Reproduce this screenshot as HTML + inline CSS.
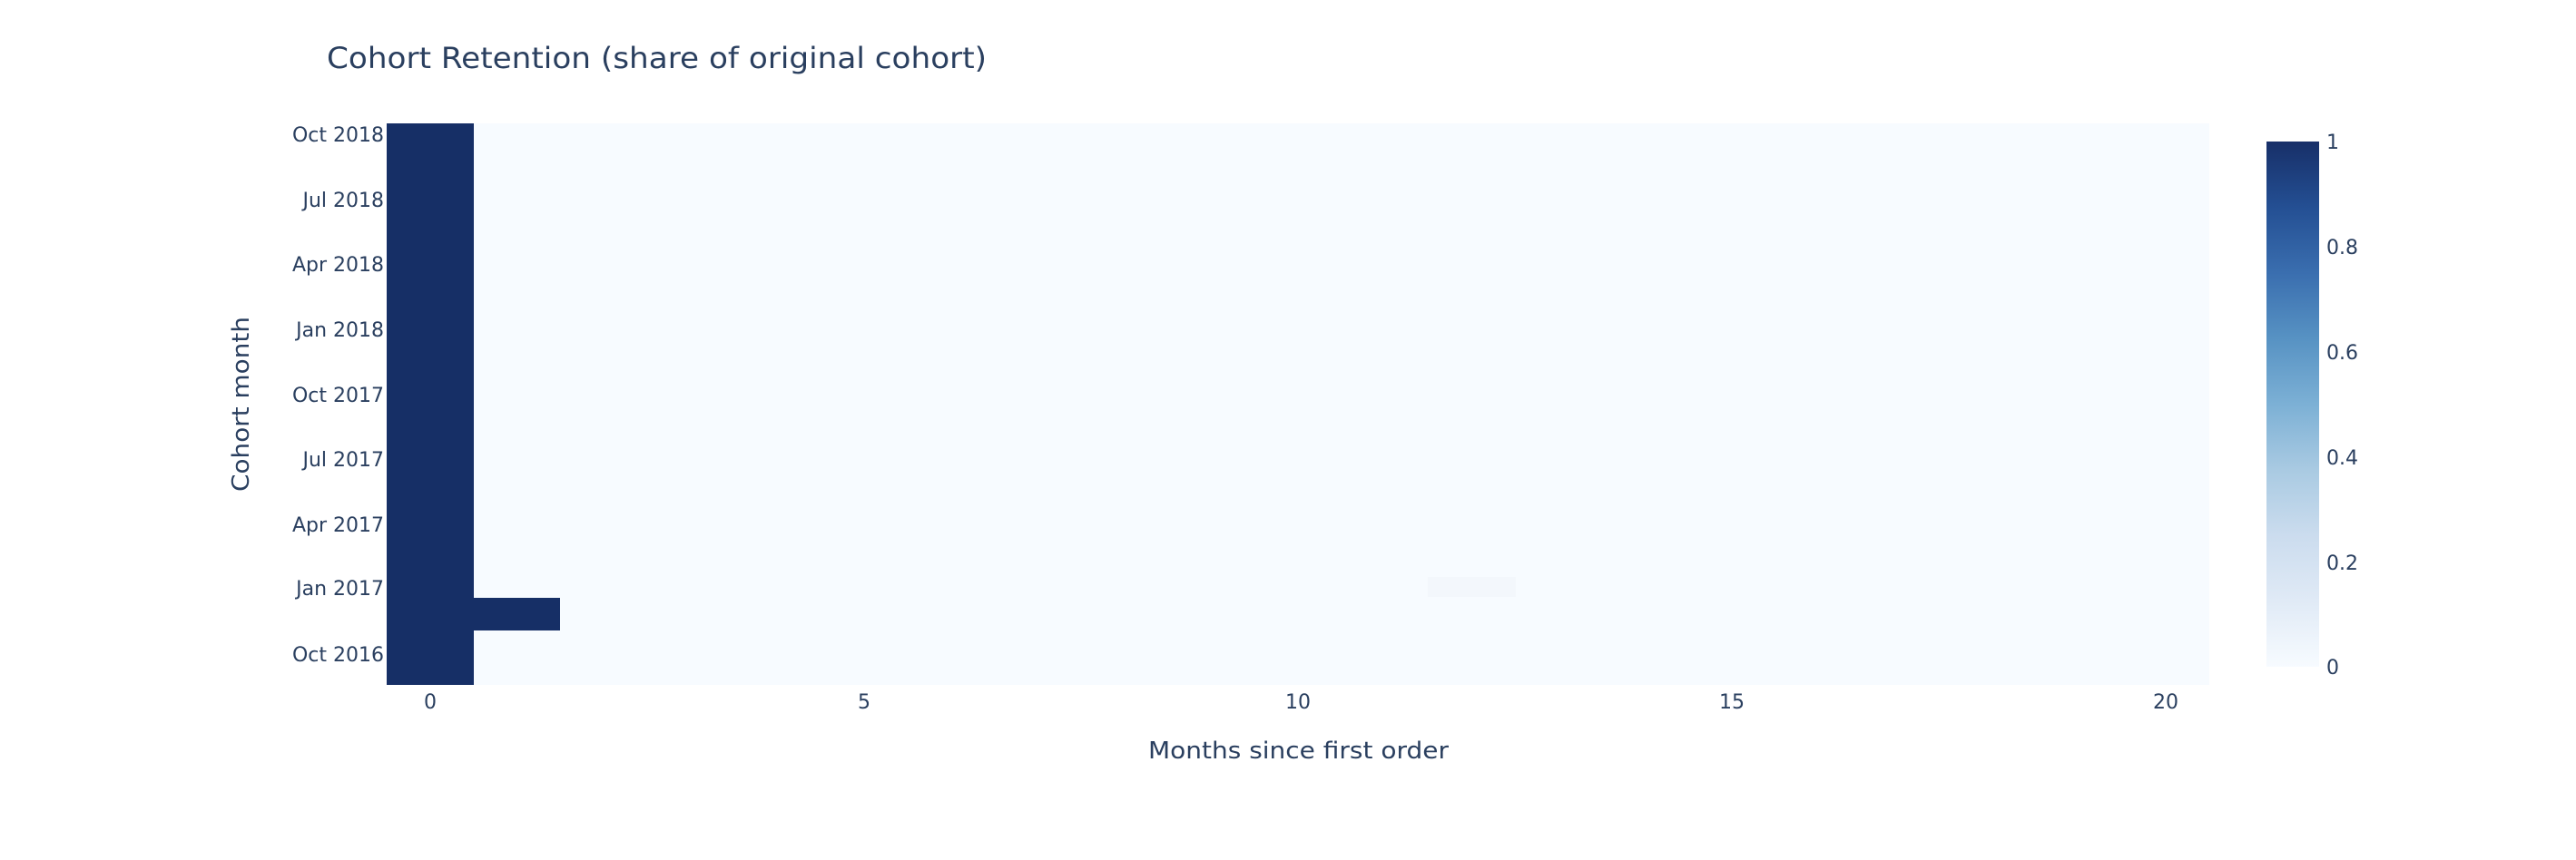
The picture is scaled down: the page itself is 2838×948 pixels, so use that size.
<!DOCTYPE html>
<html><head><meta charset="utf-8"><style>
html,body{margin:0;padding:0;background:#fff;}
svg{display:block;font-family:"DejaVu Sans","Liberation Sans",sans-serif;}
</style></head><body>
<svg width="2838" height="948" viewBox="0 0 2838 948" xmlns="http://www.w3.org/2000/svg">
<defs>
<linearGradient id="cb" x1="0" y1="1" x2="0" y2="0">
<stop offset="0" stop-color="#f7fbff"/>
<stop offset="0.125" stop-color="#e0eaf6"/>
<stop offset="0.25" stop-color="#cbdcee"/>
<stop offset="0.375" stop-color="#a9cae2"/>
<stop offset="0.5" stop-color="#7cb0d5"/>
<stop offset="0.625" stop-color="#5792c3"/>
<stop offset="0.75" stop-color="#3a6eaf"/>
<stop offset="0.875" stop-color="#244f93"/>
<stop offset="1" stop-color="#172f68"/>
</linearGradient>
</defs>
<text x="360" y="75" font-size="32" fill="#2a3f5f" textLength="727" lengthAdjust="spacingAndGlyphs">Cohort Retention (share of original cohort)</text>
<rect x="426" y="136" width="2008" height="619" fill="#f7fbff"/>
<rect x="1573" y="636" width="97" height="22" fill="#f3f7fc"/>
<rect x="426" y="136" width="96" height="619" fill="#162f66"/>
<rect x="521" y="659" width="96" height="36" fill="#162f66"/>
<g font-size="22" fill="#2a3f5f" text-anchor="end">
<text x="423" y="156">Oct 2018</text>
<text x="423" y="228">Jul 2018</text>
<text x="423" y="299">Apr 2018</text>
<text x="423" y="371">Jan 2018</text>
<text x="423" y="443">Oct 2017</text>
<text x="423" y="514">Jul 2017</text>
<text x="423" y="586">Apr 2017</text>
<text x="423" y="656">Jan 2017</text>
<text x="423" y="729">Oct 2016</text>
</g>
<g font-size="22" fill="#2a3f5f" text-anchor="middle">
<text x="474" y="781">0</text>
<text x="952" y="781">5</text>
<text x="1430" y="781">10</text>
<text x="1908" y="781">15</text>
<text x="2386" y="781">20</text>
</g>
<text x="1265" y="836" font-size="26" fill="#2a3f5f" textLength="331" lengthAdjust="spacingAndGlyphs">Months since first order</text>
<text transform="translate(274,542) rotate(-90)" font-size="26" fill="#2a3f5f" textLength="193" lengthAdjust="spacingAndGlyphs">Cohort month</text>
<rect x="2497" y="156" width="58" height="579" fill="url(#cb)"/>
<g font-size="22" fill="#2a3f5f">
<text x="2563" y="164">1</text>
<text x="2563" y="280">0.8</text>
<text x="2563" y="396">0.6</text>
<text x="2563" y="512">0.4</text>
<text x="2563" y="628">0.2</text>
<text x="2563" y="743">0</text>
</g>
</svg>
</body></html>
